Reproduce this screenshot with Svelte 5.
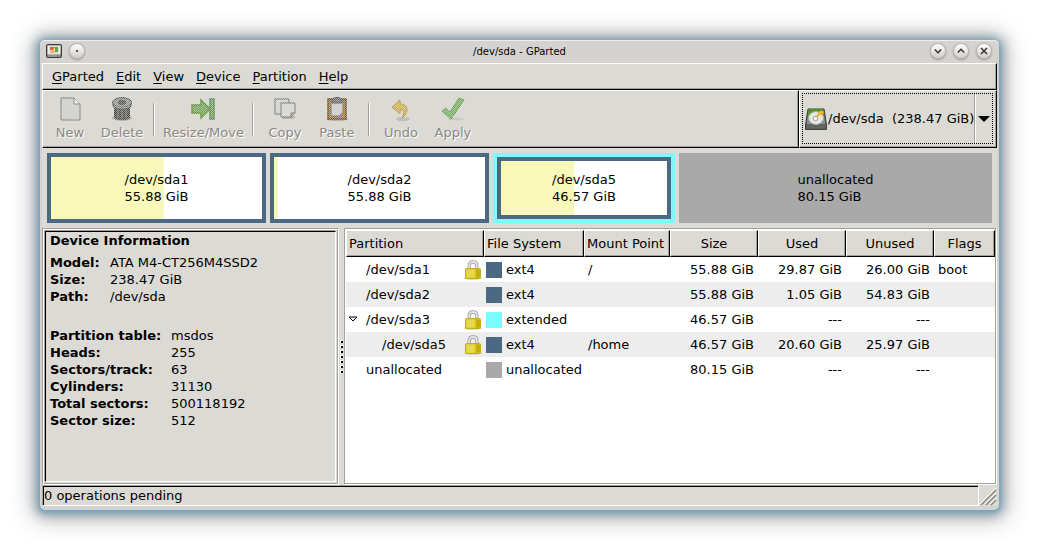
<script>
  const menus = ['GParted', 'Edit', 'View', 'Device', 'Partition', 'Help'];

  const toolGroups = [
    ['New', 'Delete'],
    ['Resize/Move'],
    ['Copy', 'Paste'],
    ['Undo', 'Apply']
  ];

  const segments = [
    { name: '/dev/sda1', size: '55.88 GiB', share: 211, used: 53.5, kind: 'ext4' },
    { name: '/dev/sda2', size: '55.88 GiB', share: 211, used: 1.9, kind: 'ext4' },
    { name: '/dev/sda5', size: '46.57 GiB', share: 174, used: 44, kind: 'logical' },
    { name: 'unallocated', size: '80.15 GiB', share: 305, used: 0, kind: 'free' }
  ];

  const device = [
    ['Model:', 'ATA M4-CT256M4SSD2'],
    ['Size:', '238.47 GiB'],
    ['Path:', '/dev/sda']
  ];

  const geometry = [
    ['Partition table:', 'msdos'],
    ['Heads:', '255'],
    ['Sectors/track:', '63'],
    ['Cylinders:', '31130'],
    ['Total sectors:', '500118192'],
    ['Sector size:', '512']
  ];

  const columns = ['Partition', 'File System', 'Mount Point', 'Size', 'Used', 'Unused', 'Flags'];

  const rows = [
    { name: '/dev/sda1', lock: true, fs: 'ext4', mount: '/', size: '55.88 GiB', used: '29.87 GiB', unused: '26.00 GiB', flags: 'boot' },
    { name: '/dev/sda2', lock: false, fs: 'ext4', mount: '', size: '55.88 GiB', used: '1.05 GiB', unused: '54.83 GiB', flags: '' },
    { name: '/dev/sda3', lock: true, open: true, fs: 'extended', mount: '', size: '46.57 GiB', used: '---', unused: '---', flags: '' },
    { name: '/dev/sda5', lock: true, child: true, fs: 'ext4', mount: '/home', size: '46.57 GiB', used: '20.60 GiB', unused: '25.97 GiB', flags: '' },
    { name: 'unallocated', lock: false, fs: 'unallocated', mount: '', size: '80.15 GiB', used: '---', unused: '---', flags: '' }
  ];
</script>

<div class="desktop">
  <main class="window">
    <header class="titlebar">
      <svg class="app-icon" width="16" height="14" viewBox="0 0 16 14" aria-hidden="true">
        <rect x=".5" y=".5" width="15" height="13" rx="1" fill="#777" stroke="#3b3b3b" />
        <rect x="1.5" y="1.5" width="13" height="9" fill="#eee" />
        <rect x="3" y="2" width="10" height="8" fill="#e3e0cf" />
        <path d="M4 3h5l-2 3H4z" fill="#e8632c" />
        <path d="M9 3h3v5H9z" fill="#58a84a" />
        <path d="M4 7l4-2 1 4H5z" fill="#f0aa72" />
        <path d="M2 12h9" stroke="#bbb" />
        <path d="M12 12h2" stroke="#7fd060" />
      </svg>
      <button class="round" aria-label="Window menu"><svg width="14" height="14" viewBox="0 0 14 14"><rect x="6" y="6" width="2" height="2" fill="#555" /></svg></button>
      <h1>/dev/sda - GParted</h1>
      <div class="win-controls">
        <button class="round" aria-label="Minimize"><svg width="14" height="14" viewBox="0 0 14 14"><path d="M3.8 5.5L7 8.7l3.2-3.2" /></svg></button>
        <button class="round" aria-label="Maximize"><svg width="14" height="14" viewBox="0 0 14 14"><path d="M3.8 8.5L7 5.3l3.2 3.2" /></svg></button>
        <button class="round" aria-label="Close"><svg width="14" height="14" viewBox="0 0 14 14"><path d="M4 4l6 6M10 4l-6 6" /></svg></button>
      </div>
    </header>

    <nav class="menubar raised">
      {#each menus as m}
        <button><u>{m[0]}</u>{m.slice(1)}</button>
      {/each}
    </nav>

    <div class="toolbar">
      <div class="tools raised">
        {#each toolGroups as group, g}
          {#if g > 0}<span class="sep"></span>{/if}
          {#each group as tool}
            <button class="tool" disabled>
              <span class="stipple">
                <svg width="24" height="24" viewBox="0 0 24 24" aria-hidden="true">
                  {#if tool === 'New'}
                    <path d="M3 1h13l6 6v16H3z" fill="#cfcfcf" stroke="#555" />
                    <path d="M16 1v6h6" fill="#fff" stroke="#555" />
                  {:else if tool === 'Delete'}
                    <ellipse cx="12" cy="21" rx="10" ry="3" fill="#999" />
                    <path d="M4 8v12q0 3 8 3t8-3V8z" fill="#222" />
                    <path d="M8 12v9M12 13v9M16 12v9" stroke="#555" stroke-width="1.500" />
                    <path d="M2.500 5v4q2 4 9.500 4t9.500-4V5z" fill="#2c2c2c" />
                    <ellipse cx="12" cy="5.500" rx="9.500" ry="4.800" fill="#888" stroke="#111" />
                    <path d="M8 4q4-3 8 0v3q-4 2-8 0z" fill="#333" />
                    <path d="M4 9q8 4 16 0" fill="none" stroke="#aaa" />
                  {:else if tool === 'Resize/Move'}
                    <path d="M1 8h9V3l9 9-9 9v-5H1z" fill="#5ba01c" stroke="#2f7a02" stroke-width="1.500" />
                    <rect x="19" y="2" width="4" height="20" fill="#5ba01c" stroke="#2f7a02" stroke-width="1.500" />
                  {:else if tool === 'Copy'}
                    <path d="M2 2h14v11l-4 4H2z" fill="#d4d4d4" stroke="#444" />
                    <path d="M8 19h15l-3 3H10z" fill="#999" />
                    <path d="M8 6h14v10l-4 4H8z" fill="#d8d8d8" stroke="#444" />
                    <path d="M18 20v-4h4" fill="#aaa" stroke="#444" />
                  {:else if tool === 'Paste'}
                    <ellipse cx="12" cy="22" rx="11" ry="2" fill="#999" />
                    <rect x="3" y="2" width="18" height="20" fill="#9a6008" stroke="#3c2200" stroke-width="1.500" />
                    <path d="M6 4h12v11l-4 4H6z" fill="#ccc" stroke="#444" />
                    <path d="M7 6V3l3-2.500h4L17 3v3z" fill="#555" stroke="#222" />
                  {:else if tool === 'Undo'}
                    <ellipse cx="14" cy="22" rx="7" ry="2" fill="#aaa" />
                    <path d="M3 10l8-7v4c8 0 10 8 2 14 3-6 2-8-2-8v4z" fill="#d4ac10" stroke="#9a8000" />
                  {:else}
                    <ellipse cx="15" cy="22" rx="8" ry="1.500" fill="#bbb" />
                    <path d="M1 14l4-3 4 4 9-14 5 2-13 19z" fill="#5cab40" stroke="#34802a" />
                  {/if}
                </svg>
              </span>
              {tool}
            </button>
          {/each}
        {/each}
      </div>
      <div class="device raised">
        <label class="picker">
          <svg width="22" height="24" viewBox="0 0 22 24" aria-hidden="true">
            <path d="M3 2h16l2.500 16v4.500H.5V18z" fill="#5f615e" stroke="#3e403d" />
            <path d="M3.800 2.500h14.400l2 14.500H1.800z" fill="#8d908a" />
            <path d="M4 2.500h14l1 7H3z" fill="#4b9a12" />
            <ellipse cx="11" cy="11" rx="7.500" ry="6.500" fill="#e6e8e3" stroke="#a5a7a3" />
            <circle cx="10.500" cy="11.500" r="2.200" fill="#fff" stroke="#999" />
            <path d="M11 10l4-6h3l1 2-4 2z" fill="#f5c320" stroke="#d79c10" stroke-width=".6" />
            <path d="M2 18.500h18v3H2z" fill="#656763" />
          </svg>
          <select aria-label="Device">
            <option>/dev/sda&nbsp; (238.47 GiB)</option>
          </select>
          <span class="arrow"></span>
        </label>
      </div>
    </div>

    <section class="graph" aria-label="Disk layout">
      {#each segments as s}
        <div class="segment {s.kind}" style="flex-grow: {s.share}">
          <div class="fill">
            <span class="used" style="width: {s.used}%"></span>
            <p>{s.name}<br />{s.size}</p>
          </div>
        </div>
      {/each}
    </section>

    <div class="panes">
      <section class="info">
        <div class="info-inner">
          <h2>Device Information</h2>
          <dl>
            {#each device as [k, v]}<dt>{k}</dt><dd>{v}</dd>{/each}
          </dl>
          <dl class="wide">
            {#each geometry as [k, v]}<dt>{k}</dt><dd>{v}</dd>{/each}
          </dl>
        </div>
      </section>

      <div class="handle">
        <svg width="3" height="34" viewBox="0 0 3 34" shape-rendering="crispEdges" aria-hidden="true">
          {#each [0, 1, 2, 3, 4, 5, 6] as n}
            <rect x="0" y={n * 5} width="3" height="3" fill="#fff" />
            <rect x="1" y={n * 5 + 1} width="2" height="2" fill="#000" />
          {/each}
        </svg>
      </div>

      <section class="list">
        <table>
          <colgroup>
            <col class="c-name" /><col class="c-fs" /><col class="c-mount" /><col class="c-num" /><col class="c-num" /><col class="c-num" /><col />
          </colgroup>
          <thead>
            <tr>{#each columns as c, i}<th class:center={i > 2}><span>{c}</span></th>{/each}</tr>
          </thead>
          <tbody>
            {#each rows as r}
              <tr>
                <td>
                  <div class="name" class:child={r.child}>
                    <span class="expander">
                      {#if r.open}
                        <svg width="10" height="7" viewBox="0 0 10 7" aria-hidden="true"><path d="M1 1h8L5 5z" fill="#fff" stroke="#000" /></svg>
                      {/if}
                    </span>
                    <span class="label">{r.name}</span>
                    {#if r.lock}
                      <svg width="18" height="20" viewBox="0 0 18 20" role="img" aria-label="Mounted">
                        <ellipse cx="9" cy="18" rx="9" ry="1.800" fill="#d0d0c8" />
                        <path d="M5.200 9V5.500Q5.200 2 9 2t3.800 3.500V9" fill="none" stroke="#a0a0a0" stroke-width="3.400" />
                        <path d="M5.200 9V5.500Q5.200 2 9 2t3.800 3.500V9" fill="none" stroke="#e4e4e4" stroke-width="1.800" />
                        <rect x="1.500" y="8.500" width="15" height="10" rx="1" fill="#d9c71c" stroke="#c0ae20" />
                        <path d="M2.500 9.500h8v8h-8z" fill="#e8d94a" />
                        <path d="M12 9.500h4v8h-4z" fill="#c2ae08" />
                      </svg>
                    {/if}
                  </div>
                </td>
                <td><div class="fs"><i class="swatch {r.fs}"></i>{r.fs}</div></td>
                <td>{r.mount}</td>
                <td class="num">{r.size}</td>
                <td class="num">{r.used}</td>
                <td class="num">{r.unused}</td>
                <td>{r.flags}</td>
              </tr>
            {/each}
          </tbody>
        </table>
      </section>
    </div>

    <footer class="status">
      <p>0 operations pending</p>
      <svg width="18" height="21" viewBox="0 0 18 21" aria-hidden="true">
        <g stroke="#fff"><path d="M1 19L17 3M6 19L17 8M11 19l6-6" /></g>
        <g stroke="#8b8a80" stroke-width="1.500"><path d="M2 20L17 5M7 20l10-10M12 20l5-5" /></g>
      </svg>
    </footer>
  </main>
</div>

<style>
  :global(body) {
    margin: 0;
    background: #fff;
  }
  .desktop {
    box-sizing: border-box;
    min-height: 100vh;
    padding: 40px;
    display: flex;
    font: 13px/17px "DejaVu Sans", sans-serif;
    color: #000;
  }
  .window {
    box-sizing: border-box;
    flex: 1;
    min-width: 0;
    display: flex;
    flex-direction: column;
    padding: 0 2px 4px;
    background: #d6d2d0;
    border-radius: 5px;
    box-shadow:
      inset 0 1px #f0eeed,
      0 1px 3px 1px #6fabca,
      0 1px 10px 4px rgba(70, 110, 135, 0.5),
      0 2px 22px 7px rgba(70, 75, 80, 0.42);
  }
  button {
    font: inherit;
    color: inherit;
    border: 0;
    background: none;
    padding: 0;
  }
  h1, h2, p, dl, dd {
    margin: 0;
  }
  .raised {
    border: 1px solid #000;
    border-color: #fff #000 #000 #fff;
    box-shadow: inset -1px -1px #a3a199;
    background: #dcdad5;
    box-sizing: border-box;
  }

  .titlebar {
    box-sizing: border-box;
    height: 23px;
    display: grid;
    grid-template-columns: auto auto 1fr auto;
    align-items: center;
    gap: 8px;
    padding: 0 6px 1px 4px;
  }
  .titlebar h1 {
    font-size: 10px;
    line-height: 17px;
    font-weight: 400;
    text-align: center;
    padding-left: 24px;
  }
  .win-controls {
    display: flex;
    gap: 9px;
  }
  .round {
    width: 14px;
    height: 14px;
    border-radius: 50%;
    background: linear-gradient(#fff, #cfccca);
    box-shadow: 0 0 0 1px #bab7b5, 0 1px 2px 1px #9d9a98;
  }
  .round svg {
    display: block;
    fill: none;
    stroke: #333;
    stroke-width: 1.5;
  }
  .round rect {
    stroke: none;
  }

  .menubar {
    display: flex;
    align-items: center;
    height: 27px;
    padding: 0 3px;
  }
  .menubar button {
    padding: 0 6px;
  }
  u {
    text-underline-offset: 2px;
  }

  .toolbar {
    display: flex;
    height: 58px;
  }
  .tools {
    flex: 1;
    display: flex;
    align-items: center;
    padding-left: 1px;
  }
  .tool {
    display: flex;
    flex-direction: column;
    align-items: center;
    gap: 3px;
    min-width: 52px;
    padding: 0 3px;
    color: #8b8982;
    text-shadow: 1px 1px #fff;
  }
  .stipple {
    display: block;
    width: 24px;
    height: 24px;
    -webkit-mask: conic-gradient(#000c 25%, #0006 0 50%, #000c 0 75%, #0006 0) 0 0 / 2px 2px;
    mask: conic-gradient(#000c 25%, #0006 0 50%, #000c 0 75%, #0006 0) 0 0 / 2px 2px;
  }
  .stipple svg {
    display: block;
  }
  .sep {
    width: 1px;
    height: 33px;
    margin: 0 5px;
    background: #a3a199;
    border-right: 1px solid #fff;
  }
  .device {
    padding: 2px;
    display: flex;
  }
  .picker {
    display: flex;
    align-items: center;
    border: 1px dotted #000;
    margin: 0 1px 1px 0;
    padding-left: 2px;
  }
  select {
    appearance: none;
    font: inherit;
    color: #000;
    border: 0;
    background: none;
    padding: 0 0 0 1px;
    width: 147px;
    height: 24px;
    outline: 0;
  }
  .arrow {
    align-self: stretch;
    display: flex;
    align-items: center;
    justify-content: center;
    width: 17px;
    border-left: 1px solid #a3a199;
    box-shadow: inset 1px 0 #fff;
  }
  .arrow::after {
    content: '';
    border: 6px solid transparent;
    border-top-color: #000;
    border-bottom: 0;
  }

  .graph {
    display: flex;
    gap: 4px;
    padding: 5px;
    background: #dcdad5;
  }
  .segment {
    box-sizing: border-box;
    flex-basis: 0;
    height: 70px;
    display: flex;
    background: #4b6983;
    padding: 4px;
  }
  .fill {
    position: relative;
    flex: 1;
    display: flex;
    align-items: center;
    justify-content: center;
    background: #fff;
  }
  .used {
    position: absolute;
    inset: 0 auto 0 0;
    background: #f8f8ba;
  }
  .fill p {
    position: relative;
  }
  .logical {
    background: #7dfcfe;
  }
  .logical .fill {
    border: 4px solid #4b6983;
  }
  .free, .free .fill {
    background: #a9a9a9;
  }

  .panes {
    flex: 1;
    display: flex;
    background: #dcdad5;
  }
  .info {
    box-sizing: border-box;
    flex: 0 0 297px;
    display: flex;
    border: 1px solid #a3a199;
    border-color: #a3a199 #fff #fff #a3a199;
    box-shadow: inset 1px 1px #fff, inset -1px -1px #a3a199;
    padding: 2px;
  }
  .info-inner {
    flex: 1;
    border: 1px solid #000;
    border-color: #000 #fff #fff #000;
    box-shadow: -1px -1px #a3a199;
    padding: 0 4px;
  }
  h2 {
    font-size: 13px;
    line-height: 17px;
  }
  dl {
    display: grid;
    grid-template-columns: 60px 1fr;
    margin-top: 5px;
  }
  dt {
    font-weight: 700;
    white-space: nowrap;
  }
  dl.wide {
    grid-template-columns: 121px 1fr;
    margin-top: 22px;
  }
  .handle {
    width: 5px;
    display: flex;
    align-items: center;
    justify-content: center;
  }

  .list {
    flex: 1;
    min-width: 0;
    border: 1px solid #a3a199;
    margin: 0 1px 1px 0;
    box-shadow: 1px 1px #fff;
    background: #fff;
    padding: 1px 0 0 1px;
  }
  table {
    width: 100%;
    table-layout: fixed;
    border-collapse: collapse;
  }
  .c-name { width: 138px; }
  .c-fs { width: 100px; }
  .c-mount { width: 86px; }
  .c-num { width: 88px; }
  th, td {
    padding: 0;
    font-weight: 400;
    text-align: left;
    white-space: nowrap;
  }
  th span {
    box-sizing: border-box;
    display: block;
    height: 27px;
    padding: 4px 2px;
    background: #dcdad5;
    border: 1px solid #000;
    border-color: #fff #000 #000 #fff;
    box-shadow: inset -1px -1px #a3a199;
  }
  th.center {
    text-align: center;
  }
  td {
    height: 25px;
    padding: 0 4px;
  }
  td:nth-child(-n + 2) {
    padding: 0 2px;
  }
  td.num {
    text-align: right;
  }
  tbody tr:nth-child(even) {
    background: #ededed;
  }
  .name, .fs {
    display: flex;
    align-items: center;
  }
  .expander {
    display: flex;
    width: 18px;
  }
  .label {
    flex: 1;
  }
  .child .expander {
    width: 34px;
  }
  .fs {
    gap: 4px;
  }
  .swatch {
    width: 16px;
    height: 16px;
    background: #4b6983;
  }
  .extended { background: #7dfcfe; }
  .unallocated { background: #a9a9a9; }

  .status {
    display: flex;
    height: 21px;
    background: #dcdad5;
  }
  .status p {
    box-sizing: border-box;
    flex: 1;
    border: 1px solid #a3a199;
    border-color: #a3a199 #fff #fff #a3a199;
    box-shadow: inset 1px 1px #000;
    padding: 1px;
  }
</style>
